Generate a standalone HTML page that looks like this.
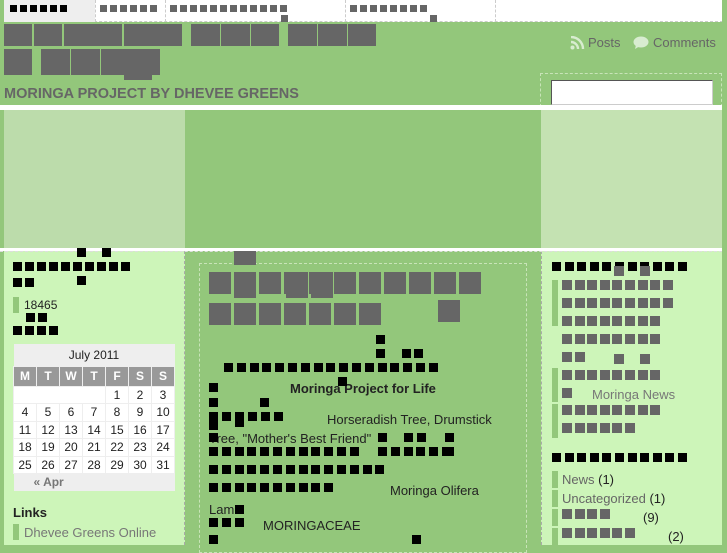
<!DOCTYPE html><html><head><meta charset="utf-8"><style>
*{margin:0;padding:0;box-sizing:border-box}
body{width:727px;height:545px;overflow:hidden;background:#93c77b;font-family:"Liberation Sans",sans-serif;position:relative}
.a{position:absolute}
.k{position:absolute;background:#000}
.g{position:absolute;background:#666}
.t{position:absolute;font-size:13px;color:#222;white-space:nowrap}
table{border-collapse:collapse}
</style></head><body>
<div class="a" style="left:4px;top:0;width:719px;height:22px;background:#fff;border:1px dashed #ccc;border-top:none"></div>
<div class="a" style="left:4px;top:0;width:91px;height:22px;background:#eee"></div>
<div class="a" style="left:95px;top:0;height:22px;border-left:1px dashed #ccc"></div>
<div class="a" style="left:165px;top:0;height:22px;border-left:1px dashed #ccc"></div>
<div class="a" style="left:345px;top:0;height:22px;border-left:1px dashed #ccc"></div>
<div class="a" style="left:495px;top:0;height:22px;border-left:1px dashed #ccc"></div>
<div class="a" style="left:4px;top:86px;font-size:14.5px;font-weight:bold;color:#666">MORINGA PROJECT BY DHEVEE GREENS</div>
<svg class="a" style="left:570px;top:36px" width="16" height="14" viewBox="0 0 16 14"><circle cx="2.5" cy="11.5" r="2" fill="#d8ecd0"/><path d="M1 6a7 7 0 0 1 7 7M1 1a12 12 0 0 1 12 12" stroke="#d8ecd0" stroke-width="2.4" fill="none"/></svg>
<div class="a" style="left:588px;top:35px;font-size:13px;color:#666">Posts</div>
<svg class="a" style="left:633px;top:36px" width="16" height="14" viewBox="0 0 16 14"><ellipse cx="8" cy="6" rx="7.5" ry="5.5" fill="#d8ecd0"/><path d="M3 9l-1 4 5-3z" fill="#d8ecd0"/></svg>
<div class="a" style="left:653px;top:35px;font-size:13px;color:#666">Comments</div>
<div class="a" style="left:540px;top:73px;width:182px;height:34px;border:1px dashed #c8e4b8"></div>
<div class="a" style="left:551px;top:80px;width:162px;height:25px;background:#fff;border:1px solid #555;border-right-color:#ccc;border-bottom-color:#ccc"></div>
<div class="a" style="left:0;top:105px;width:722px;height:5px;background:#fff"></div>
<div class="a" style="left:4px;top:110px;width:181px;height:138px;background:#bcdcab"></div>
<div class="a" style="left:541px;top:110px;width:181px;height:138px;background:#c4e2b2"></div>
<div class="a" style="left:0;top:248px;width:722px;height:3px;background:#fff"></div>
<div class="a" style="left:722px;top:0;width:5px;height:545px;background:#93c77b"></div>
<div class="a" style="left:0;top:251px;width:185px;height:294px;background:#cdf5b9;border-left:4px solid #93c77b;border-right:1px dashed #aaa"></div>
<div class="a" style="left:541px;top:251px;width:181px;height:294px;background:#cdf5b9;border-left:1px dashed #aaa"></div>
<div class="a" style="left:0;top:251px;width:722px;border-top:1px dashed #ddd"></div>
<div class="a" style="left:199px;top:263px;width:328px;height:290px;border:1px dashed #c8e4b8"></div>
<div class="a" style="left:13px;top:297px;width:6px;height:16px;background:#93c77b"></div>
<div class="t" style="left:24px;top:298px;font-size:12px">18465</div>
<table class="a" style="left:13px;top:344px;width:162px;font-size:12px;text-align:center;color:#222">
<tr><td colspan="7" style="background:#eee;height:22px">July 2011</td></tr>
<tr style="background:#999;color:#fff;font-weight:bold;height:20px"><td style="border:1px solid #eee">M</td><td style="border:1px solid #eee">T</td><td style="border:1px solid #eee">W</td><td style="border:1px solid #eee">T</td><td style="border:1px solid #eee">F</td><td style="border:1px solid #eee">S</td><td style="border:1px solid #eee">S</td></tr>
<tbody style="background:#fff">
<tr style="height:17.5px"><td colspan="4" style="border:1px solid #eee"></td><td style="border:1px solid #eee">1</td><td style="border:1px solid #eee">2</td><td style="border:1px solid #eee">3</td></tr>
<tr style="height:17.5px"><td style="border:1px solid #eee">4</td><td style="border:1px solid #eee">5</td><td style="border:1px solid #eee">6</td><td style="border:1px solid #eee">7</td><td style="border:1px solid #eee">8</td><td style="border:1px solid #eee">9</td><td style="border:1px solid #eee">10</td></tr>
<tr style="height:17.5px"><td style="border:1px solid #eee">11</td><td style="border:1px solid #eee">12</td><td style="border:1px solid #eee">13</td><td style="border:1px solid #eee">14</td><td style="border:1px solid #eee">15</td><td style="border:1px solid #eee">16</td><td style="border:1px solid #eee">17</td></tr>
<tr style="height:17.5px"><td style="border:1px solid #eee">18</td><td style="border:1px solid #eee">19</td><td style="border:1px solid #eee">20</td><td style="border:1px solid #eee">21</td><td style="border:1px solid #eee">22</td><td style="border:1px solid #eee">23</td><td style="border:1px solid #eee">24</td></tr>
<tr style="height:17.5px"><td style="border:1px solid #eee">25</td><td style="border:1px solid #eee">26</td><td style="border:1px solid #eee">27</td><td style="border:1px solid #eee">28</td><td style="border:1px solid #eee">29</td><td style="border:1px solid #eee">30</td><td style="border:1px solid #eee">31</td></tr>
</tbody>
<tr style="background:#eee;height:17px"><td colspan="7" style="text-align:left;padding-left:20px;color:#777;font-weight:bold">« Apr</td></tr>
</table>
<div class="t" style="left:13px;top:505px;font-weight:bold;font-size:13px">Links</div>
<div class="a" style="left:13px;top:524px;width:6px;height:16px;background:#93c77b"></div>
<div class="t" style="left:24px;top:525px;color:#777;font-size:13px">Dhevee Greens Online</div>
<div class="t" style="left:290px;top:381px;font-weight:bold">Moringa Project for Life</div>
<div class="t" style="left:327px;top:412px">Horseradish Tree, Drumstick</div>
<div class="t" style="left:209px;top:431px">Tree, "Mother's Best Friend"</div>
<div class="t" style="left:390px;top:483px">Moringa Olifera</div>
<div class="t" style="left:209px;top:502px">Lam</div>
<div class="t" style="left:263px;top:518px">MORINGACEAE</div>
<div class="a" style="left:552px;top:280px;width:6px;height:46px;background:#93c77b"></div>
<div class="a" style="left:552px;top:368px;width:6px;height:34px;background:#93c77b"></div>
<div class="a" style="left:552px;top:404px;width:6px;height:34px;background:#93c77b"></div>
<div class="t" style="left:592px;top:387px;color:#777">Moringa News</div>
<div class="a" style="left:552px;top:471px;width:6px;height:17px;background:#93c77b"></div>
<div class="a" style="left:552px;top:490px;width:6px;height:17px;background:#93c77b"></div>
<div class="a" style="left:552px;top:509px;width:6px;height:17px;background:#93c77b"></div>
<div class="a" style="left:552px;top:528px;width:6px;height:17px;background:#93c77b"></div>
<div class="t" style="left:562px;top:472px;color:#666;font-size:13px">News <span style="color:#222">(1)</span></div>
<div class="t" style="left:562px;top:491px;color:#666;font-size:13px">Uncategorized <span style="color:#222">(1)</span></div>
<div class="t" style="left:643px;top:510px;font-size:13px">(9)</div>
<div class="t" style="left:668px;top:529px;font-size:13px">(2)</div>
<script>
function sq(cls,x,y,w,h){var d=document.createElement('div');d.className=cls;d.style.cssText='left:'+x+'px;top:'+y+'px;width:'+w+'px;height:'+(h||w)+'px';document.body.appendChild(d);}
function row(cls,x,y,n,p,w,h){for(var i=0;i<n;i++)sq(cls,x+i*p,y,w,h);}
row('k',10,5,6,10,7,7);
row('g',100,5,6,10,7,7);
row('g',170,5,12,10,7,7);sq('g',281,15,7,7);
row('g',350,5,8,10,7,7);sq('g',430,15,7,7);
[[4,28],[34,28],[64,58],[124,58],[191,29],[221,29],[251,28],[288,29],[318,29],[348,28]].forEach(function(a){sq('g',a[0],24,a[1],22)});
[[4,28],[41,29],[71,29],[101,59]].forEach(function(a){sq('g',a[0],49,a[1],26)});sq('g',124,70,28,10);
row('k',13,262,10,12,9,9);sq('k',77,248,9,9);sq('k',102,248,9,9);
row('k',13,278,2,12,9,9);sq('k',77,276,9,9);
row('k',26,313,2,12,9,9);
row('k',13,326,4,12,9,9);
row('g',209,272,11,25,22,22);sq('g',234,251,22,14);sq('g',234,272,22,26);sq('g',286,272,22,26);sq('g',311,272,22,26);
row('g',209,303,6,25,22,22);sq('g',359,303,22,22);sq('g',438,300,22,22);
sq('k',376,335,9,9);sq('k',376,349,9,9);sq('k',402,349,9,9);sq('k',414,349,9,9);
row('k',224,363,17,12.8,9,9);sq('k',338,377,9,9);
sq('k',209,383,9,9);sq('k',209,398,9,9);sq('k',260,398,9,9);
row('k',222,412,5,13,9,9);sq('k',209,412,9,18);sq('k',235,412,9,15);
sq('k',209,433,9,9);sq('k',378,433,9,9);sq('k',404,433,9,9);sq('k',417,433,9,9);sq('k',445,433,9,9);
row('k',209,447,12,12.8,9,9);row('k',378,447,6,12.8,9,9);sq('k',445,447,9,9);
row('k',209,465,14,12.8,9,9);
row('k',209,483,10,12.8,9,9);
sq('k',235,505,9,9);row('k',209,518,3,12.8,9,9);
sq('k',209,535,9,9);sq('k',412,535,9,9);
row('k',552,262,11,12.6,9,9);
[[280,9],[298,9],[316,8],[334,8],[352,2],[370,8],[388,1],[405,8],[423,6]].forEach(function(r){row('g',562,r[0],r[1],12.6,10,10)});
sq('g',614,266,10,10);sq('g',640,266,10,10);sq('g',614,354,10,10);sq('g',640,354,10,10);
row('k',552,453,11,12.6,9,9);
row('g',562,509,4,12.6,10,10);row('g',562,528,6,12.6,10,10);
</script>
</body></html>
